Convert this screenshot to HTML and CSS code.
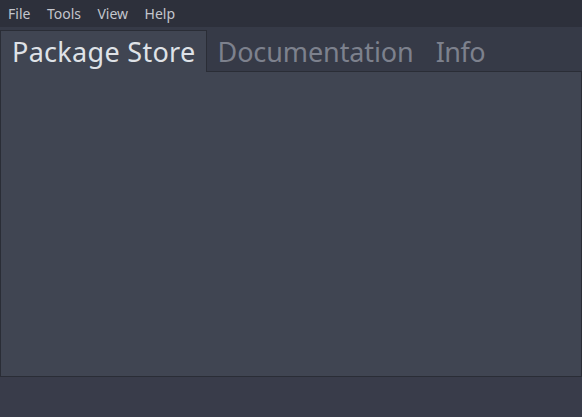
FILE: index.html
```html
<!DOCTYPE html>
<html>
<head>
<meta charset="utf-8">
<link rel="stylesheet" href="styles.css">
</head>
<body>
<div class="app">
  <div class="menubar">
    <span class="menu-item">File</span>
    <span class="menu-item">Tools</span>
    <span class="menu-item">View</span>
    <span class="menu-item">Help</span>
  </div>
  <div class="tabbar">
    <div class="tab active">Package Store</div>
    <div class="tab">Documentation</div>
    <div class="tab tight">Info</div>
  </div>
  <div class="panel"></div>
  <div class="statusbar"></div>
</div>
</body>
</html>
```

FILE: styles.css
```css
html, body {
  margin: 0;
  padding: 0;
  background: #383b49;
}
.app {
  width: 582px;
  height: 417px;
  display: flex;
  flex-direction: column;
  font-family: "Noto Sans", "Open Sans", sans-serif;
}
.menubar {
  height: 27px;
  background: #2d303b;
  display: flex;
  align-items: center;
  padding-left: 8px;
  box-sizing: border-box;
}
.menu-item {
  color: #c3c6cd;
  font-size: 14px;
  margin-right: 16.5px;
}
.tabbar {
  display: flex;
  padding-top: 3px;
  background: #363a47;
  height: 45px;
  box-sizing: border-box;
}
.tab {
  height: 42px;
  box-sizing: border-box;
  padding: 0 10px;
  font-size: 27px;
  line-height: 42px;
  color: #7d818d;
  border: 1px solid transparent;
  border-bottom: none;
  letter-spacing: -0.1px;
}
.tab.active {
  position: relative;
  z-index: 1;
  padding: 0 10px 0 11px;
  background: #404552;
  color: #dfe2e7;
  border-color: #2a2d36;
  letter-spacing: 0.3px;
}
.tab.tight {
  letter-spacing: -0.5px;
}
.panel {
  height: 306px;
  background: #404552;
  border: 1px solid #2a2d36;
  box-sizing: border-box;
  margin-top: -1px;
  position: relative;
  z-index: 0;
}
.statusbar {
  flex: 1;
  background: #393c4a;
}
```
